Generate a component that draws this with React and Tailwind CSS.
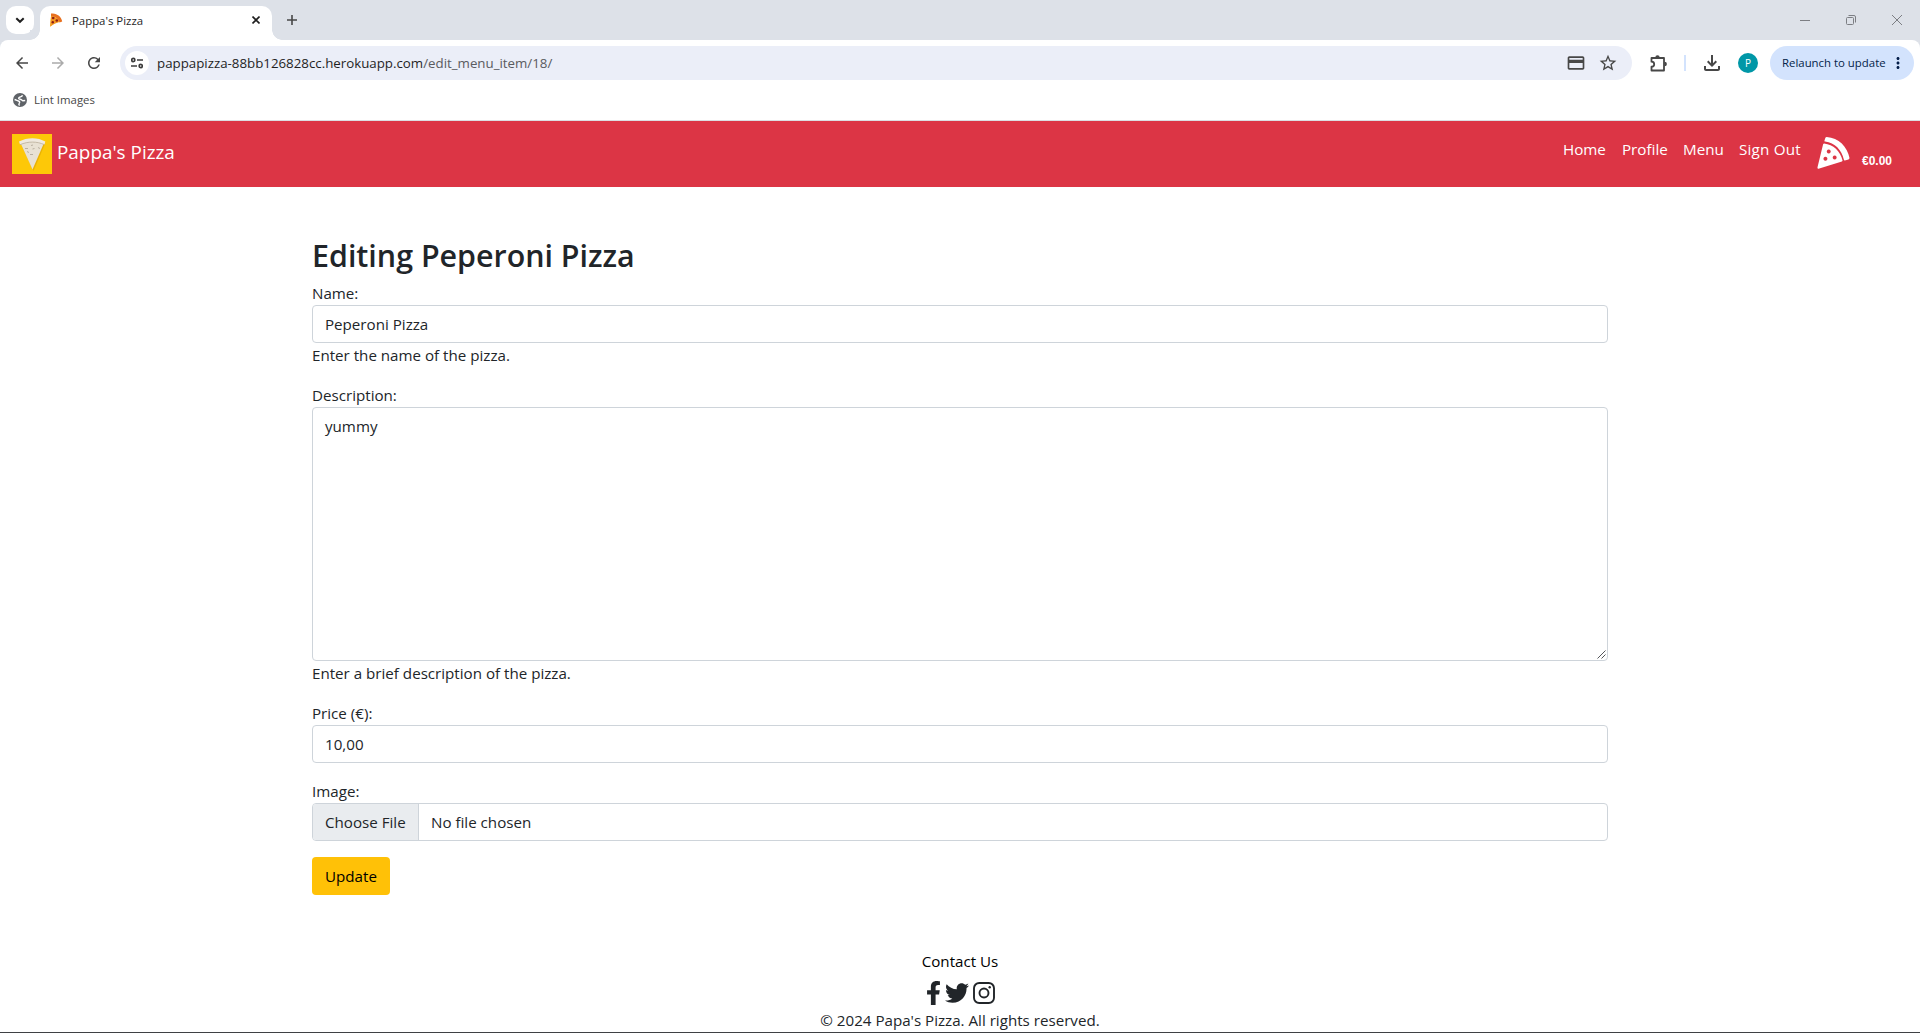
import React from "react";
import {
  MdArrowBack,
  MdArrowForward,
  MdRefresh,
  MdOutlineCreditCard,
  MdStarOutline,
  MdOutlineFileDownload,
  MdMoreVert,
} from "react-icons/md";
import { FaFacebookF, FaTwitter } from "react-icons/fa";

function Favicon() {
  return (
    <svg viewBox="0 0 16 16" className="h-4 w-4">
      <path d="M3.200 3 11.800 9 6 11.800 2 14.800Z" fill="#fbb62c" />
      <path d="M3 1.600C8 .4 13.600 4.400 14.200 9.400L11.500 10.600C10.600 7 7 4.200 3 4.200Z" fill="#e8701f" />
      <path d="M3 4C6.800 4 10.200 6.400 11.500 10L6.500 11.800 2.200 14.600Z" fill="#f59a23" />
      <circle cx="5.200" cy="6" r="1.300" fill="#8f1d16" />
      <circle cx="8.800" cy="8.500" r="1.300" fill="#8f1d16" />
      <circle cx="4.800" cy="10.300" r="1.200" fill="#8f1d16" />
    </svg>
  );
}

function PuzzleIcon() {
  return (
    <svg viewBox="0 0 17 17" className="ml-[18px] h-[17px] w-[17px] shrink-0">
      <path
        d="M1.500 3H14V15.500H1.500V11.700C3 11.700 4.200 10.700 4.200 9.200S3 6.700 1.500 6.700Z"
        fill="none"
        stroke="#474747"
        strokeWidth="1.800"
        strokeLinejoin="round"
      />
      <path d="M5.300 2.600A2.200 2.400 0 0 1 9.700 2.600ZM14.500 6.700A2.400 2.300 0 0 1 14.500 11.300Z" fill="#474747" />
    </svg>
  );
}

function PizzaSliceIcon() {
  return (
    <svg viewBox="0 0 99 97" className="mt-4 h-8 w-[33px]" fill="#fff">
      <path d="M25 2Q26 0 29 0C65 2 92 30 98 64Q98 67 95 68L84 71Q82 72 81 69C74 39 54 18 24 14Q22 14 22 11Z" />
      <path
        fillRule="evenodd"
        d="M21 20C49 23 70 43 77 71Q77 73 75 74L4 96Q0 97 1 92L18 22Q19 20 21 20ZM35 38a6 6 0 1 0 .1 0ZM25 60a6 6 0 1 0 .1 0ZM53 56a6 6 0 1 0 .1 0Z"
      />
    </svg>
  );
}

function InstagramIcon() {
  return (
    <svg viewBox="0 0 22 22" className="h-[22px] w-[22px]" fill="none" stroke="#212529" strokeWidth="1.900">
      <rect x="1" y="1" width="20" height="20" rx="5.200" />
      <circle cx="11" cy="11" r="4.500" />
      <circle cx="16.700" cy="5.300" r="1.200" fill="#212529" stroke="none" />
    </svg>
  );
}

function TabStrip() {
  return (
    <div className="flex h-10 items-start bg-[#dde1e8]">
      <button className="ml-1.5 mt-1.5 flex h-7 w-7 items-center justify-center rounded-[10px] bg-white">
        <svg viewBox="0 0 10 10" className="h-[10px] w-[10px]" fill="none" stroke="#1f1f1f" strokeWidth="2">
          <path d="M1.300 3.200 5 6.800 8.700 3.200" />
        </svg>
      </button>
      <div className="relative ml-1.5 mt-1.5 flex h-[34px] w-[232px] items-center rounded-t-[10px] bg-white pb-1.5">
        <div className="absolute bottom-0 -left-2.5 h-2.5 w-2.5 bg-[radial-gradient(circle_at_0_0,#dde1e8_9.5px,#fff_10px)]" />
        <div className="absolute bottom-0 -right-2.5 h-2.5 w-2.5 bg-[radial-gradient(circle_at_100%_0,#dde1e8_9.5px,#fff_10px)]" />
        <div className="ml-2">
          <Favicon />
        </div>
        <span className="ml-2 mt-px text-[11.400px] leading-4 text-[#1f1f1f]">Pappa's Pizza</span>
        <svg viewBox="0 0 8 8" className="ml-auto mr-3 h-2 w-2" stroke="#1f1f1f" strokeWidth="1.600">
          <path d="M.5.5 7.500 7.500M7.500.5.5 7.500" />
        </svg>
      </div>
      <svg viewBox="0 0 10 10" className="ml-[15px] mt-[15px] h-[10px] w-[10px]" stroke="#474747" strokeWidth="1.600">
        <path d="M5 0V10M0 5H10" />
      </svg>
      <div className="ml-auto mr-[18px] mt-[15px] flex gap-9">
        <svg viewBox="0 0 10 10" className="h-[10px] w-[10px]" stroke="#7c7e83" fill="none">
          <path d="M0 5.500H10" />
        </svg>
        <svg viewBox="0 0 10 10" className="h-[10px] w-[10px]" stroke="#7c7e83" fill="none">
          <rect x=".5" y="2.500" width="7" height="7" rx="1" />
          <path d="M2.500.5H8Q9.500.5 9.500 2V7.500" />
        </svg>
        <svg viewBox="0 0 10 10" className="h-[10px] w-[10px]" stroke="#7c7e83" fill="none">
          <path d="M0 0 10 10M10 0 0 10" />
        </svg>
      </div>
    </div>
  );
}

function Toolbar() {
  return (
    <div className="bg-[#dde1e8]">
      <div className="flex h-10 items-end rounded-t-[8px] bg-white">
        <div className="flex h-[34px] w-[120px] items-center pl-[13px]">
          <MdArrowBack className="h-[18px] w-[18px] text-[#474747]" />
          <MdArrowForward className="ml-[18px] h-[18px] w-[18px] text-[#ababab]" />
          <MdRefresh className="ml-[18px] h-[18px] w-[18px] text-[#474747]" />
        </div>
        <div className="flex h-[34px] w-[1512px] items-center rounded-full bg-[#ebeef8] pl-[5px] pr-[14px]">
          <div className="flex h-6 w-6 items-center justify-center rounded-full bg-white">
            <svg viewBox="0 0 12 12" className="h-3 w-3" fill="none" stroke="#3c3c3c" strokeWidth="1.600">
              <circle cx="2.300" cy="3" r="1.600" />
              <path d="M6 3H12M0 9H6" />
              <circle cx="9.700" cy="9" r="1.600" />
            </svg>
          </div>
          <span className="ml-2 text-[13.300px] leading-5 text-[#1f1f1f]">
            pappapizza-88bb126828cc.herokuapp.com<span className="text-[#5a5b60]">/edit_menu_item/18/</span>
          </span>
          <MdOutlineCreditCard className="ml-auto h-5 w-5 text-[#474747]" />
          <MdStarOutline className="ml-3 h-5 w-5 text-[#474747]" />
        </div>
        <div className="flex h-[34px] items-center">
          <PuzzleIcon />
          <div className="ml-[17px] h-4 w-0.5 bg-[#d3e3fd]" />
          <MdOutlineFileDownload className="ml-[14px] h-6 w-6 text-[#474747]" />
          <div className="ml-[14px] flex h-5 w-5 items-center justify-center rounded-full bg-[#0097a7] text-[10px] leading-none text-white">
            P
          </div>
          <div className="ml-3 flex h-[34px] w-36 items-center rounded-full bg-[#d3e3fd] pl-3 text-[#041e49]">
            <span className="whitespace-nowrap text-[11.400px] leading-4">Relaunch to update</span>
            <MdMoreVert className="ml-auto mr-[7px] h-[18px] w-[18px]" />
          </div>
        </div>
      </div>
      <div className="flex h-10 items-center border-b border-white bg-white pl-[13px]">
        <svg viewBox="0 0 14 14" className="h-[14px] w-[14px]">
          <circle cx="7" cy="7" r="7" fill="#5f6368" />
          <path
            d="M9.500 2.200C9 4 7.600 3.600 6.300 4.300 5.200 5 5.600 6.200 7 6.200 8.600 6.200 8.800 7.600 10 7.800L12.200 7.500"
            fill="none"
            stroke="#fff"
            strokeWidth="1.400"
          />
          <path
            d="M1.600 6.500C3 7 4 7.600 5.400 8 6.800 8.400 7 9.500 6.200 10.300 5.700 11 6 12 6.600 12.500"
            fill="none"
            stroke="#fff"
            strokeWidth="1.400"
          />
        </svg>
        <span className="ml-[7px] text-[11.400px] leading-4 text-[#474747]">Lint Images</span>
      </div>
      <div className="h-px bg-[#dcdfe2]" />
    </div>
  );
}

function BrandLogo() {
  return (
    <svg viewBox="0 0 40 40" className="h-10 w-10">
      <rect width="40" height="40" fill="#fdc808" />
      <path d="M8.500 9 21.500 37 33 10Z" fill="#d59b00" opacity=".5" />
      <path d="M8.500 9C16 6.500 25 6.500 32 9L20.500 35.500Z" fill="#e8e1d3" />
      <path d="M7 7.500C15 3 26 3 33.300 7.500L32.500 10.500C25 7 16 7 8 10.500Z" fill="#efe9df" />
      <path d="M8 10.700C16 7.200 25 7.200 32.500 10.700" fill="none" stroke="#b9ad98" strokeWidth=".8" />
      <path
        d="M13 14.500h3M19 11.500l2-.5M26 13.500l2 1M18 20.500h3M20.500 15l2-.5M15 17.500l2 1"
        stroke="#b3aa9b"
        strokeWidth=".9"
      />
    </svg>
  );
}

function Navbar() {
  return (
    <nav className="flex h-[66px] bg-[#dc3545] text-white">
      <a className="ml-3 flex h-[66px] items-center">
        <BrandLogo />
        <span className="mb-[5px] ml-[5px] text-[18.900px] leading-[30px]">Pappa's Pizza</span>
      </a>
      <div className="ml-auto flex text-[15.200px] leading-6">
        <a className="mt-4 w-[59px]">Home</a>
        <a className="mt-4 w-[61px]">Profile</a>
        <a className="mt-4 w-14">Menu</a>
        <a className="mt-4 w-[78px] tracking-[0.200px]">Sign Out</a>
        <PizzaSliceIcon />
        <span className="ml-3 mr-7 mt-[30px] font-['Liberation_Sans'] text-[12px] font-bold leading-5">€0.00</span>
      </div>
    </nav>
  );
}

const control = "flex h-[38px] items-center rounded-[4px] border border-[#ced4da] px-3";

function EditForm() {
  return (
    <main className="mx-auto w-[1296px] pt-[50px]">
      <h2 className="mb-[6px] text-[30.400px] font-semibold leading-[38px]">Editing Peperoni Pizza</h2>
      <div className="mb-4">
        <div>Name:</div>
        <div className={control}>Peperoni Pizza</div>
        <div>Enter the name of the pizza.</div>
      </div>
      <div className="mb-4">
        <div>Description:</div>
        <div className="relative h-[254px] rounded-[4px] border border-[#ced4da] px-3 py-1.5">
          yummy
          <svg viewBox="0 0 9 9" className="absolute bottom-px right-px h-[9px] w-[9px]" stroke="#55565a" strokeWidth="1">
            <path d="M.5 8.500 8.500.5M4.500 8.500 8.500 4.500" />
          </svg>
        </div>
        <div>Enter a brief description of the pizza.</div>
      </div>
      <div className="mb-4">
        <div>Price (€):</div>
        <div className={control}>10,00</div>
      </div>
      <div className="mb-4">
        <div>Image:</div>
        <div className="flex h-[38px] overflow-hidden rounded-[4px] border border-[#ced4da] leading-9">
          <span className="w-[106px] border-r border-[#ced4da] bg-[#e9ecef] pl-3">Choose File</span>
          <span className="pl-3">No file chosen</span>
        </div>
      </div>
      <button className="flex h-[38px] w-[78px] items-center justify-center rounded-[4px] bg-[#ffc107] text-black">
        Update
      </button>
    </main>
  );
}

function Footer() {
  return (
    <footer className="mt-[54px] flex flex-col items-center">
      <div className="text-black">Contact Us</div>
      <div className="mt-2 flex h-6 items-center gap-1">
        <FaFacebookF className="h-6 w-[15px]" />
        <FaTwitter className="h-6 w-6" />
        <InstagramIcon />
      </div>
      <div className="mt-[3px]">© 2024 Papa's Pizza. All rights reserved.</div>
    </footer>
  );
}

export default function App() {
  return (
    <div className="flex h-[1033px] w-[1920px] flex-col overflow-hidden border-b border-[#3f4144] bg-white font-['Open_Sans','Noto_Sans',sans-serif] text-[15.150px] leading-6 text-[#212529]">
      <TabStrip />
      <Toolbar />
      <Navbar />
      <EditForm />
      <Footer />
    </div>
  );
}
